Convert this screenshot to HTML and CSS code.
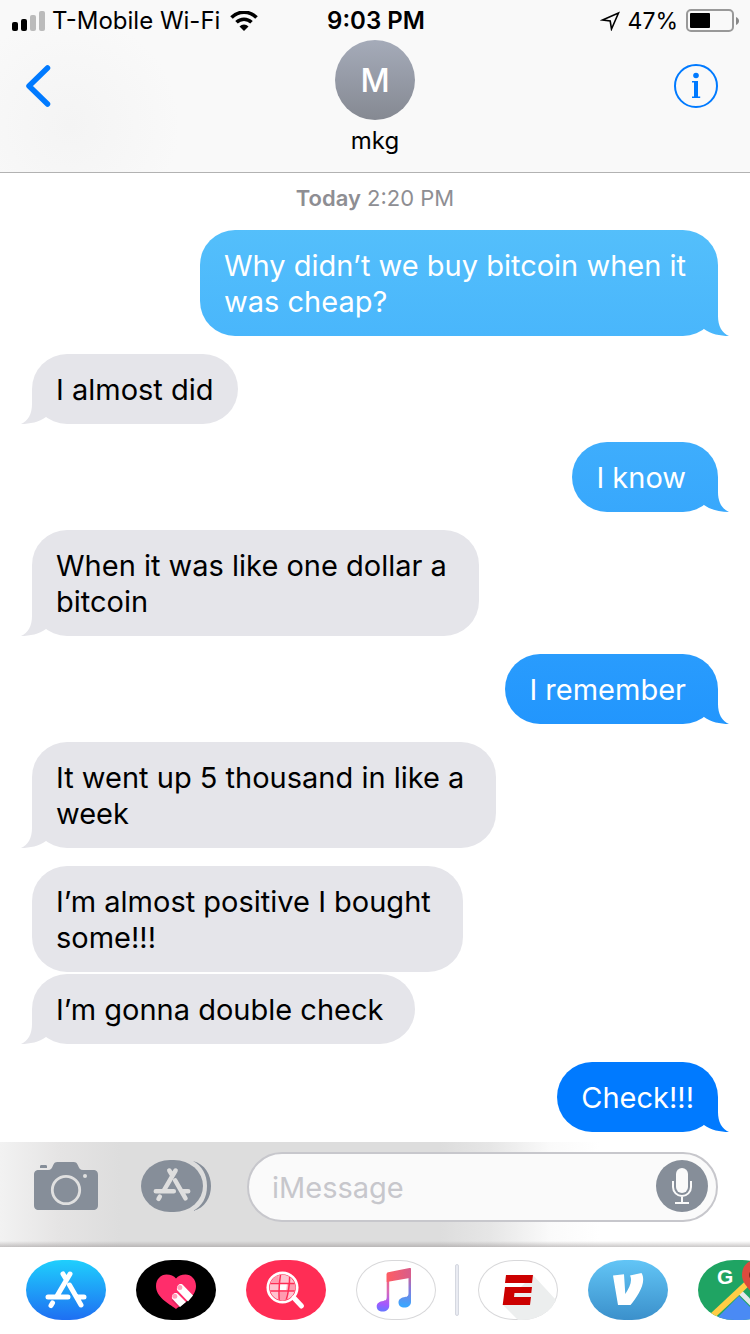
FILE: index.html
```html
<!DOCTYPE html>
<html lang="en">

<head>
  <meta charset="UTF-8">
  <meta name="viewport" content="width=device-width, initial-scale=1.0">
  <title>mkg</title>
  <link rel="stylesheet" href="styles.css">
</head>

<body>
  <svg class="defs" width="0" height="0" aria-hidden="true">
    <symbol id="app-store" viewBox="0 0 44 40">
      <g fill="none" stroke="currentColor" stroke-width="5" stroke-linecap="round">
        <path d="M19 5l3 5M26 5L13 27M4 28h20M34 28h6M25.500 16l11.500 20M8.500 34l-1.500 2.500" />
      </g>
    </symbol>
  </svg>

  <header class="header">
    <div class="status-bar">
      <div class="status-left">
        <svg width="34" height="20" viewBox="0 0 34 20" aria-hidden="true">
          <rect x="0" y="11" width="6" height="9" rx="2" />
          <rect x="9" y="8" width="6" height="12" rx="2" />
          <rect x="18" y="4" width="6" height="16" rx="2" fill="#bbb" />
          <rect x="27" y="0" width="6" height="20" rx="2" fill="#bbb" />
        </svg>
        <span>T-Mobile Wi-Fi</span>
        <svg class="wifi" width="28" height="20" viewBox="0 0 28 20" aria-hidden="true">
          <path d="M1.500 6.500a17.500 17.500 0 0 1 25 0M6.500 11.300a10.800 10.800 0 0 1 15 0" fill="none" stroke="#000" stroke-width="3.600" />
          <path d="M14 20l-4.500-4.600a6.400 6.400 0 0 1 9 0z" />
        </svg>
      </div>
      <time class="clock">9:03 PM</time>
      <div class="status-right">
        <svg width="20" height="20" viewBox="0 0 20 20" aria-hidden="true">
          <path d="M18.500 2L2.500 9l7.700 1L11.500 18z" fill="none" stroke="#000" stroke-width="1.600" />
        </svg>
        <span>47%</span>
        <svg width="54" height="24" viewBox="0 0 54 24" aria-hidden="true">
          <rect x="1" y="1" width="46" height="21" rx="4" fill="none" stroke="#999" stroke-width="2" />
          <rect x="4" y="4" width="20" height="15" rx="1" />
          <path d="M50 8c4 1.500 4 6.500 0 8z" fill="#888" />
        </svg>
      </div>
    </div>

    <div class="nav-bar">
      <button class="back" aria-label="Back">
        <svg width="26" height="44" viewBox="0 0 26 44">
          <path d="M21.500 4L3 22l18.500 18" fill="none" stroke="#007aff" stroke-width="5.500" stroke-linecap="round" stroke-linejoin="round" />
        </svg>
      </button>
      <div class="contact">
        <div class="avatar">M</div>
        <div class="name">mkg</div>
      </div>
      <button class="info" aria-label="Details">
        <svg width="44" height="44" viewBox="0 0 44 44" fill="#007aff">
          <circle cx="22" cy="22" r="21" fill="none" stroke="#007aff" stroke-width="2" />
          <circle cx="22" cy="11.500" r="2.800" />
          <path d="M18 17h6v15.500h2.200V34H18v-1.500h2V18.500h-2z" />
        </svg>
      </button>
    </div>
  </header>

  <main class="thread">
    <p class="date"><b>Today</b> 2:20 PM</p>
    <p class="bubble sent tail">Why didn’t we buy bitcoin when it<br>was cheap?</p>
    <p class="bubble received tail snug">I almost did</p>
    <p class="bubble sent tail">I know</p>
    <p class="bubble received tail">When it was like one dollar a<br>bitcoin</p>
    <p class="bubble sent tail">I remember</p>
    <p class="bubble received tail">It went up 5 thousand in like a<br>week</p>
    <p class="bubble received joined">I’m almost positive I bought<br>some!!!</p>
    <p class="bubble received tail">I’m gonna double check</p>
    <p class="bubble sent tail snug">Check!!!</p>
  </main>

  <form class="composer">
    <button type="button" aria-label="Camera">
      <svg width="64" height="48" viewBox="0 0 64 48">
        <path fill="#868e99" d="M5 8h9c3 0 4-2 5-4.500C20 1 21 0 23.500 0h16C42 0 43 1 44 3.500 45 6 46 8 49 8h10c3.500 0 5 1.500 5 5v30c0 3.500-1.500 5-5 5H5c-3.500 0-5-1.500-5-5V13c0-3.500 1.500-5 5-5zM6 6V4.500C6 3.500 6.500 3 7.500 3h4c1 0 1.500.5 1.500 1.500V6z" />
        <circle cx="32" cy="28" r="13.700" fill="none" stroke="#e0e0e0" stroke-width="2.800" />
        <circle cx="51" cy="14" r="2" fill="#e0e0e0" />
      </svg>
    </button>
    <button type="button" aria-label="Apps" class="apps-toggle">
      <svg width="70" height="52" viewBox="0 0 70 52" color="#dedede">
        <path d="M52 1c12 3 18 14 18 25s-6 22-18 25c9-5 14-13 14-25S61 6 52 1z" fill="#868e99" />
        <rect width="62" height="52" rx="29" ry="26" fill="#868e99" />
        <use href="#app-store" x="11" y="6" width="40" height="36" />
      </svg>
    </button>
    <div class="field">
      <input type="text" placeholder="iMessage" aria-label="iMessage">
      <button type="button" class="mic" aria-label="Record audio">
        <svg width="52" height="52" viewBox="0 0 52 52">
          <circle cx="26" cy="26" r="26" fill="#868e99" />
          <rect x="20" y="8" width="12" height="25" rx="6" fill="#fafafa" />
          <path d="M17 21v6a9 9 0 0 0 18 0v-6M26 36v7M19 43h14" fill="none" stroke="#fafafa" stroke-width="2" />
        </svg>
      </button>
    </div>
  </form>

  <nav class="app-strip">
    <button class="app store" aria-label="App Store">
      <svg width="80" height="60" viewBox="0 0 80 60" color="#fff">
        <use href="#app-store" x="18" y="9" width="44" height="40" />
      </svg>
    </button>
    <button class="app touch" aria-label="Digital Touch">
      <svg width="80" height="60" viewBox="0 0 80 60">
        <clipPath id="heart"><path d="M40 49C32 43 20 37 20 26c0-7 5-11.500 10.500-11.500 4 0 7.500 1.500 9.500 4 2-2.500 5.500-4 9.500-4C55 14.500 60 19 60 26c0 11-12 17-20 23z" /></clipPath>
        <g clip-path="url(#heart)">
          <rect width="80" height="60" fill="#ff2d6b" />
          <path d="M38 38l20 20" stroke="#e0245e" stroke-width="7" />
        </g>
        <path d="M46.500 24.500L57 35.500 52 41.500 41 30C40.500 26 43 23 46.500 24.500zM41.500 33.500L50 42 44 47 36 38.500C35.500 35 38 32 41.500 33.500z" fill="#fff" />
        <circle cx="43.800" cy="27.500" r="2.500" fill="#ff9fba" />
        <circle cx="38.800" cy="36.200" r="2.500" fill="#ff9fba" />
      </svg>
    </button>
    <button class="app images" aria-label="#images">
      <svg width="80" height="60" viewBox="0 0 80 60">
        <clipPath id="lens"><circle cx="36.500" cy="27.500" r="12.700" /></clipPath>
        <g clip-path="url(#lens)">
          <rect x="20" y="12" width="34" height="32" fill="#ffc4d0" />
          <path d="M34 24h7l-1 6h-7z" fill="#fff" />
          <path d="M24 12h8l1 10H20zM42 24h10v7H41zM34 32h7l-1 10h-7z" fill="#ff9bb0" />
          <path d="M20 23.500h34M20 31h34M35 12q-3 15-1.500 32M43.500 12q1 15-4.500 32" fill="none" stroke="#ff2d55" stroke-width="1.500" />
        </g>
        <path d="M48 38l7.500 8" stroke="#fff" stroke-width="5" stroke-linecap="round" />
        <circle cx="36.500" cy="27.500" r="14.700" fill="none" stroke="#fff" stroke-width="2.700" />
      </svg>
    </button>
    <button class="app outlined" aria-label="Music">
      <svg width="80" height="60" viewBox="0 0 80 60">
        <linearGradient id="note-left" gradientUnits="userSpaceOnUse" x1="32" y1="12" x2="27" y2="50">
          <stop offset="0" stop-color="#ff5c62" />
          <stop offset=".5" stop-color="#d86ab8" />
          <stop offset=".85" stop-color="#a259ff" />
          <stop offset="1" stop-color="#6d74ff" />
        </linearGradient>
        <linearGradient id="note-right" gradientUnits="userSpaceOnUse" x1="54" y1="10" x2="50" y2="46">
          <stop offset="0" stop-color="#ee5a75" />
          <stop offset=".5" stop-color="#8a78d8" />
          <stop offset="1" stop-color="#3aa6ff" />
        </linearGradient>
        <linearGradient id="beam" x1="0" x2="1">
          <stop offset="0" stop-color="#ff5c62" />
          <stop offset="1" stop-color="#d75d8c" />
        </linearGradient>
        <path d="M30.700 14h2.500v32c0 3.500-3 5.500-6.500 5.500-3.700 0-6-2-6-5 0-3.500 3-5 6.500-5.500 2.500-.4 3.500-1 3.500-4z" fill="url(#note-left)" />
        <path d="M52.500 9H55v33c0 3.500-3 5.500-6.500 5.500-3.700 0-6-2-6-5 0-3.500 3-5 6.500-5.500 2.500-.4 3.500-1 3.500-4z" fill="url(#note-right)" />
        <path d="M30.700 14c0-1.200.4-1.600 1.500-1.800L53.500 8c1-.2 1.500 0 1.500 1v8.700L30.700 22z" fill="url(#beam)" />
      </svg>
    </button>
    <span class="divider"></span>
    <button class="app outlined" aria-label="ESPN">
      <svg width="80" height="60" viewBox="0 0 80 60">
        <path d="M55 15l23 25-10 20H40L25 45z" fill="#eceeee" />
        <path d="M28 15h27l-1 8H27zM27 27h27l-.7 6H36.500l-.5 4h17l-1 8H24.700z" fill="#c00" />
      </svg>
    </button>
    <button class="app venmo" aria-label="Venmo">
      <svg width="80" height="60" viewBox="0 0 80 60">
        <path d="M25 15.500L36 14.300 37.300 34C40.500 29 43 24 43 20c0-2-.3-3.400-1-4.500L53.500 13c1.200 2 1.700 4 1.700 6.500C55.200 28 48 38.500 42.500 45H30z" fill="#fff" />
      </svg>
    </button>
    <button class="app maps" aria-label="Google Maps">
      <svg width="80" height="60" viewBox="0 0 80 60">
        <path d="M17 60l24-24 24 24z" fill="#4a8af4" />
        <path d="M48 24l40 40V10z" fill="#d9dbdd" />
        <path d="M42 32l26 26" stroke="#e6e8ea" stroke-width="5" />
        <path d="M10 60l44-41" stroke="#ffcd45" stroke-width="6" />
        <path d="M58 0c8 0 15 6 15 15 0 11-12 14-14 30C56 30 44 26 44 15 44 6 50 0 58 0z" fill="#dd4b3e" />
        <circle cx="57" cy="15" r="6" fill="#7d2b24" />
        <text x="19" y="24" class="maps-mark">G</text>
      </svg>
    </button>
  </nav>
</body>

</html>
```
FILE: styles.css
```css
* {
  box-sizing: border-box;
}

body {
  margin: 0;
  min-height: 100vh;
  display: flex;
  flex-direction: column;
  background: #fff;
  color: #000;
  font-family: Inter, "Liberation Sans", sans-serif;
}

button {
  flex: none;
  padding: 0;
  border: 0;
  background: none;
}

svg {
  display: block;
}

.defs {
  position: absolute;
}

/* header */
.header {
  height: 173px;
  border-bottom: 1px solid #b2b2b2;
  background: radial-gradient(circle at 70px 125px, #f4f4f4, #f9f9f9 110px);
}

.status-bar {
  height: 41px;
  padding: 0 10px 0 12px;
  display: grid;
  grid-template-columns: 1fr auto 1fr;
  align-items: center;
  font-size: 24px;
}

.status-left,
.status-right {
  display: flex;
  align-items: center;
  gap: 6px;
}

.status-right {
  justify-content: flex-end;
  gap: 8px;
  font-size: 23px;
}

.wifi {
  margin-left: 4px;
}

.clock {
  font-weight: 600;
}

.nav-bar {
  display: grid;
  grid-template-columns: 1fr auto 1fr;
  align-items: start;
  margin-top: -1px;
  padding: 0 32px 0 26px;
}

.back {
  justify-self: start;
  margin-top: 24px;
}

.info {
  justify-self: end;
  margin-top: 24px;
}

.contact {
  display: flex;
  flex-direction: column;
  align-items: center;
  margin-left: 6px;
}

.avatar {
  width: 80px;
  height: 80px;
  border-radius: 50%;
  background: linear-gradient(#a5abb9, #858992);
  color: #fff;
  font-size: 32px;
  font-weight: 500;
  line-height: 82px;
  text-align: center;
}

.name {
  margin-top: 6px;
  font-size: 24px;
  line-height: 30px;
}

/* messages */
.thread {
  flex: 1;
  display: flex;
  flex-direction: column;
  align-items: flex-start;
  padding: 12px 32px 10px;
}

.date {
  align-self: center;
  margin: 0 0 19px;
  color: #8e8e93;
  font-size: 22px;
  line-height: 26px;
}

.date b {
  font-weight: 600;
}

.bubble {
  position: relative;
  margin: 0 0 18px;
  padding: 18px 32px 16px 24px;
  border-radius: 35px;
  font-size: 29px;
  line-height: 36px;
}

.bubble:last-child {
  margin-bottom: 0;
}

.joined {
  margin-bottom: 2px;
}

.snug {
  padding-right: 24px;
}

.received {
  background: #e5e5ea;
}

/* one gradient runs down the whole screen behind the sent bubbles */
.sent,
.sent::after {
  background: linear-gradient(#6bd2fa, #007aff 1062px) fixed;
}

.sent {
  align-self: flex-end;
  color: #fff;
}

.tail::after {
  content: "";
  position: absolute;
  bottom: 0;
  width: 26px;
  height: 35px;
}

.sent::after {
  right: -12px;
  clip-path: path("M0 0H14V15C14 25 18 32 25 35C16 35 7 33 0 28Z");
}

.received::after {
  left: -12px;
  background: #e5e5ea;
  clip-path: path("M26 0H12V15C12 25 8 32 1 35C10 35 19 33 26 28Z");
}

/* composer */
.composer {
  display: flex;
  align-items: center;
  height: 105px;
  padding: 0 32px 15px 34px;
  background:
    linear-gradient(transparent 99px, rgba(150, 145, 145, 0.5) 105px),
    linear-gradient(90deg, #f2f2f2, #e5e4e4 60px, #dddddd 120px, #dddddd 440px, #e6e6e6 490px, #fafafa 550px, #fff 600px);
}

.composer button {
  padding-bottom: 2px;
}

.apps-toggle {
  margin: 0 36px 0 43px;
}

.field {
  flex: 1;
  min-width: 0;
  display: flex;
  align-items: center;
  height: 70px;
  padding: 0 8px 0 23px;
  border: 2px solid #c7c7cc;
  border-radius: 35px;
  background: #fafafa;
}

.field input {
  width: 100%;
  min-width: 0;
  padding: 0;
  border: 0;
  outline: 0;
  background: none;
  font: inherit;
  font-size: 29px;
}

.field input::placeholder {
  color: #c7c7cc;
}

/* app strip */
.app-strip {
  display: flex;
  align-items: center;
  gap: 30px;
  padding: 13px 0 14px 26px;
  overflow: hidden;
}

.app {
  width: 80px;
  height: 60px;
  border-radius: 36px / 30px;
  overflow: hidden;
}

.store {
  background: linear-gradient(#1fcffd, #1e6ff2);
}

.touch {
  background: #000;
}

.images {
  background: #ff2d55;
}

.outlined {
  background: #fff;
  box-shadow: inset 0 0 0 1px #d8d8da;
}

.venmo {
  background: linear-gradient(#62c5f6, #3b90cb);
}

.maps {
  background: #1fa463;
}

.maps-mark {
  fill: #fff;
  font-size: 21px;
  font-weight: 600;
}

.divider {
  flex: none;
  width: 4px;
  height: 52px;
  margin: 0 -11px;
  border: 1px solid #d5d8e0;
  border-radius: 2px;
  background: #e9ebf2;
}
```
